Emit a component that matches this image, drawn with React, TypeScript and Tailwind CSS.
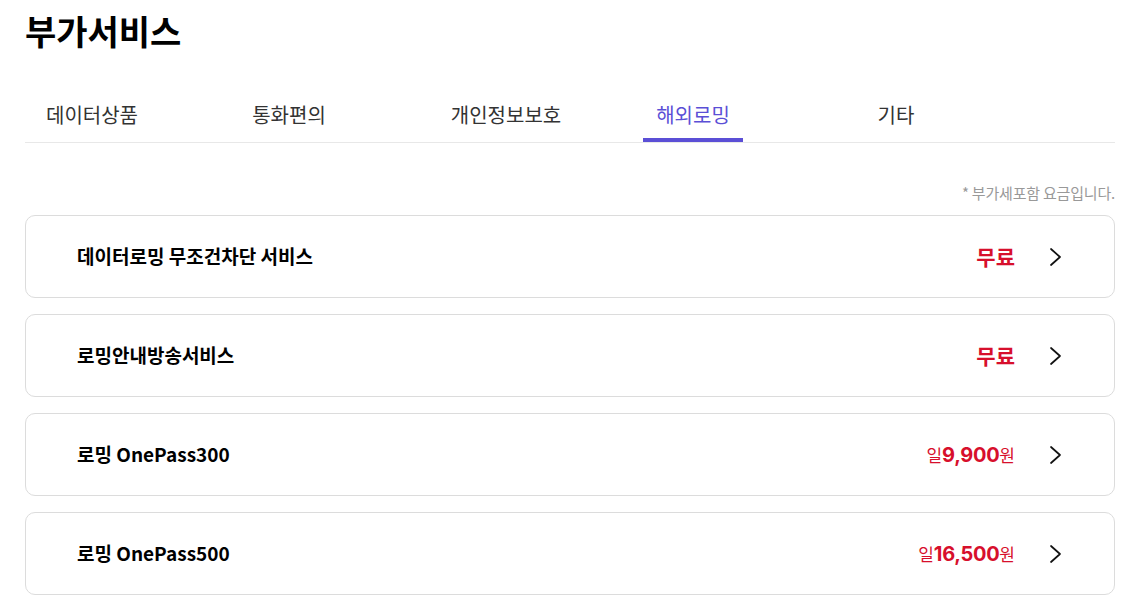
const tabs = [
  { label: '데이터상품', w: 'w-[134px]' },
  { label: '통화편의', w: 'w-[260px]' },
  { label: '개인정보보호', w: 'w-[174px]' },
  { label: '해외로밍', w: 'w-[200px]', active: true },
  { label: '기타', w: 'w-[206px]' },
]

type Item = { name: string; free?: boolean; price?: string }

const items: Item[] = [
  { name: '데이터로밍 무조건차단 서비스', free: true },
  { name: '로밍안내방송서비스', free: true },
  { name: '로밍 OnePass300', price: '9,900' },
  { name: '로밍 OnePass500', price: '16,500' },
]

function Chevron() {
  return (
    <svg width="13" height="20" viewBox="0 0 13 20" fill="none" className="ml-[34px]">
      <path d="M2 2 L11 10 L2 18" stroke="#111" strokeWidth="1.7" strokeLinecap="round" strokeLinejoin="round" />
    </svg>
  )
}

export default function App() {
  return (
    <div className="min-h-[610px] bg-white px-[25px] pr-[13px] font-['Noto_Sans_CJK_KR','Noto_Sans',sans-serif] text-[#111]">
      <h1 className="pt-[6px] text-[34px] font-bold leading-[50px] text-black">부가서비스</h1>

      <nav className="mt-[45px] flex border-b border-[#e8e8e8]">
        {tabs.map((t) => (
          <div key={t.label} className={`flex justify-center ${t.w}`}>
            <span
              className={`flex justify-center border-b-[4px] pb-[9px] text-[20px] leading-[28px] ${
                t.active ? 'w-[100px] border-[#5b4fd6] text-[#5b4fd6]' : 'px-[14px] border-transparent text-[#333]'
              }`}
            >
              {t.label}
            </span>
          </div>
        ))}
      </nav>

      <p className="mt-[40px] text-right text-[15px] leading-[20px] tracking-[-0.2px] text-[#999]">
        * 부가세포함 요금입니다.
      </p>

      <div className="mt-[12px] flex flex-col gap-[16px]">
        {items.map((it) => (
          <div
            key={it.name}
            className="flex h-[83px] items-center rounded-[10px] border border-[#dcdcdc] pl-[51px] pr-[52px]"
          >
            <span className="flex-1 text-[19px] font-bold text-black">{it.name}</span>
            {it.free ? (
              <span className="text-[21px] font-bold text-[#d70f2c]">무료</span>
            ) : (
              <span className="flex items-baseline text-[#d70f2c]">
                <span className="text-[17px]">일</span>
                <span className="font-['Inter',sans-serif] text-[20px] font-bold tracking-[-0.3px]">{it.price}</span>
                <span className="text-[17px]">원</span>
              </span>
            )}
            <Chevron />
          </div>
        ))}
      </div>
    </div>
  )
}
